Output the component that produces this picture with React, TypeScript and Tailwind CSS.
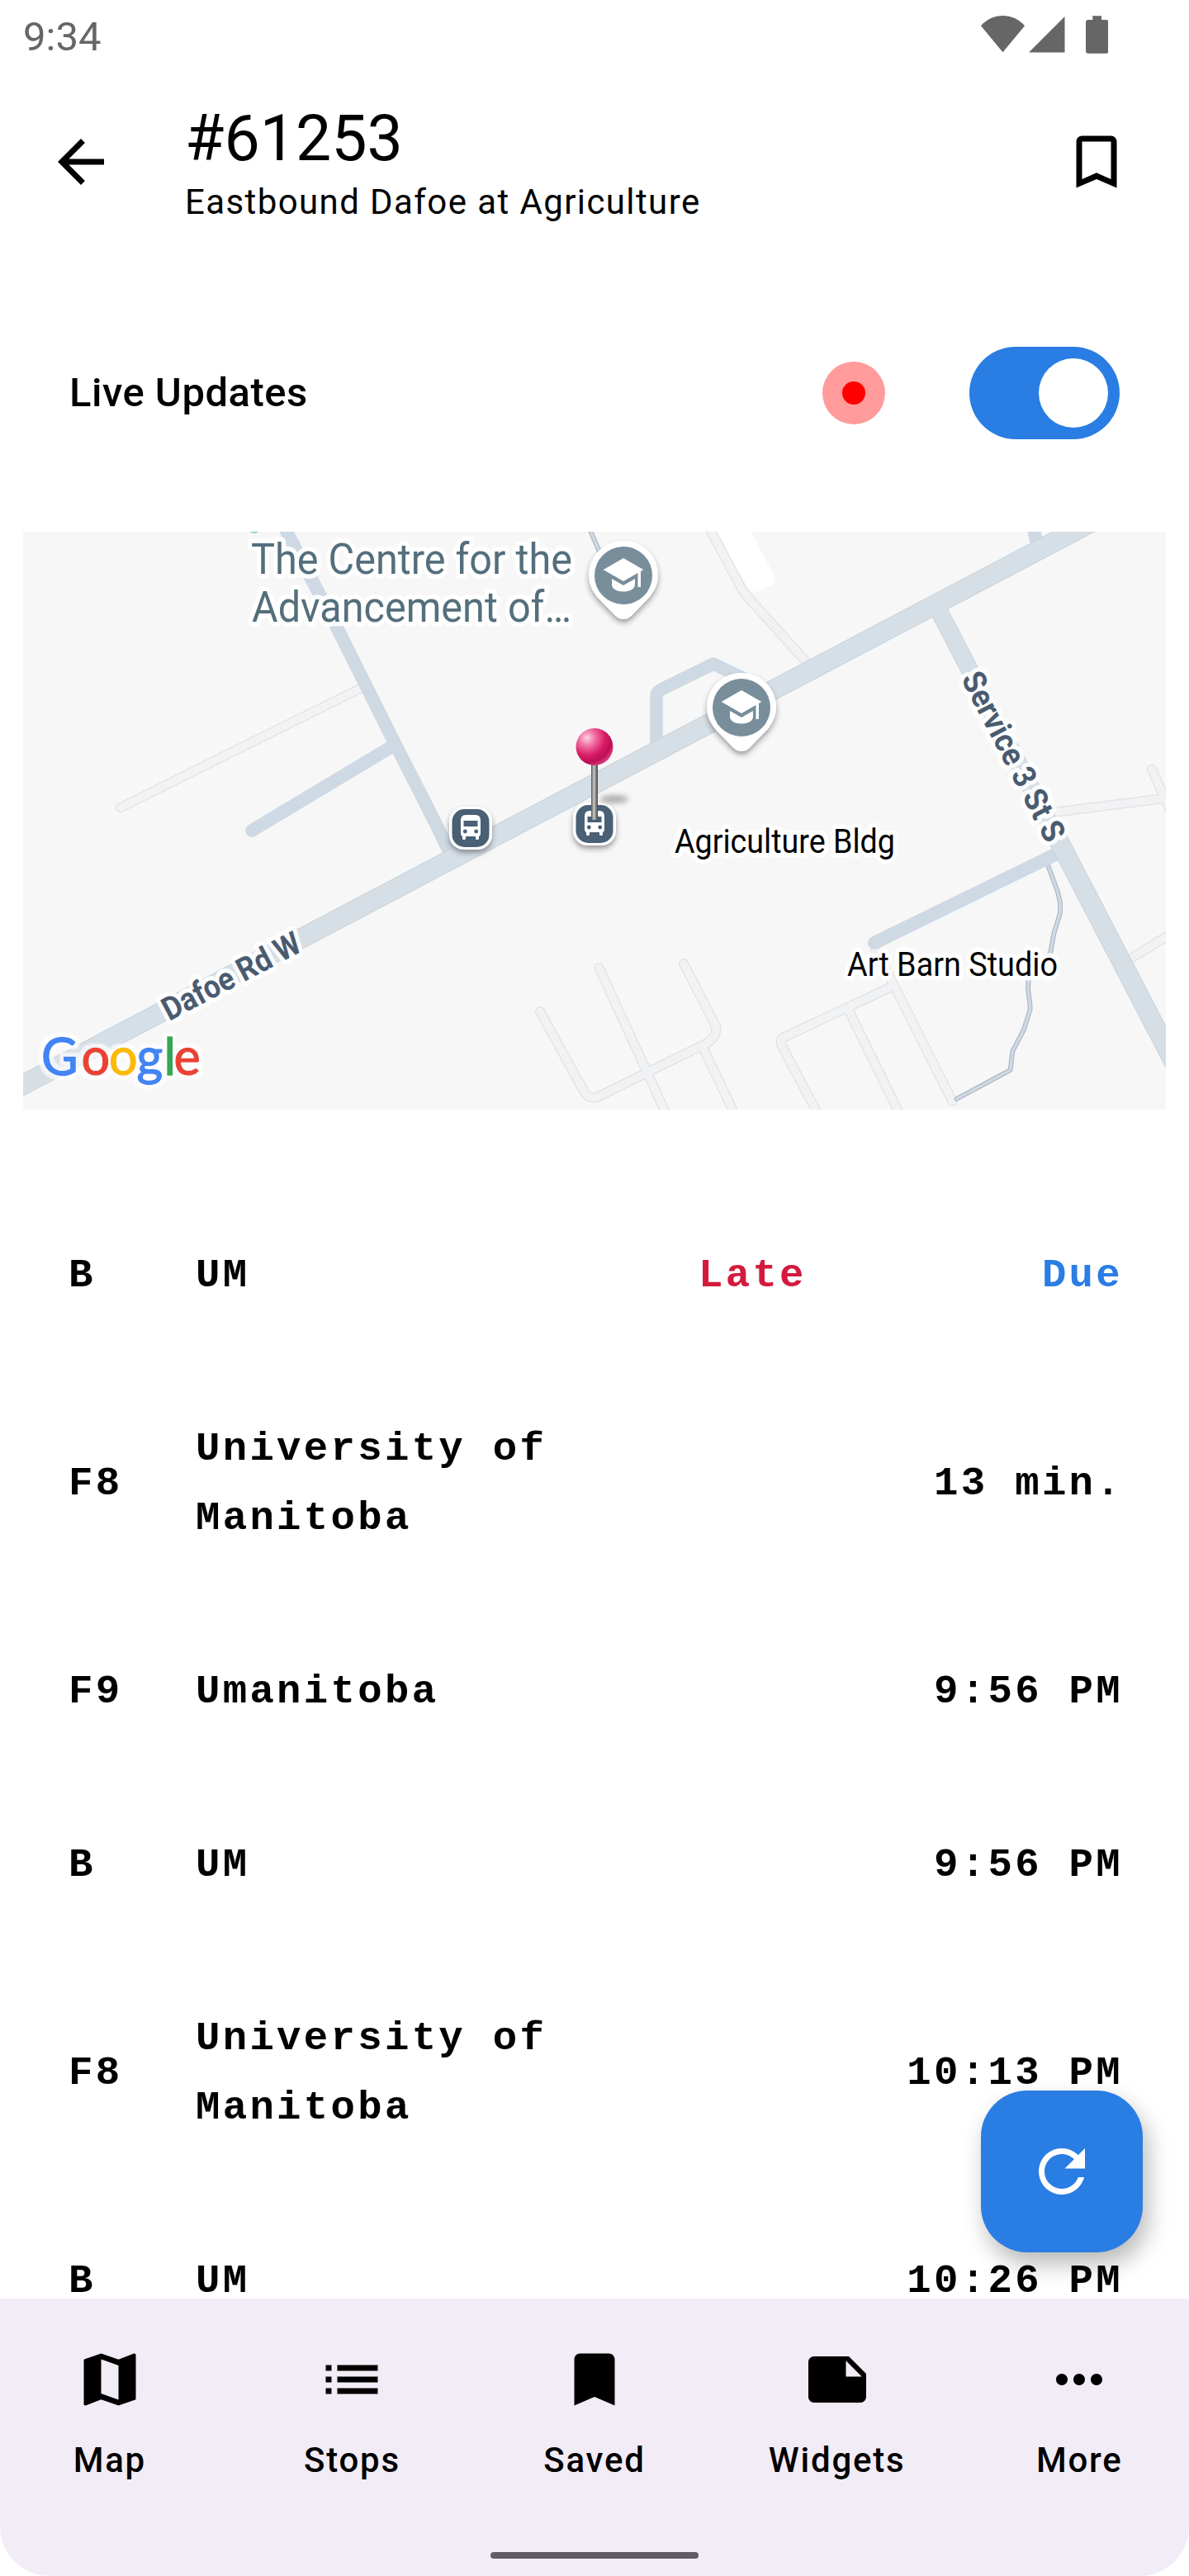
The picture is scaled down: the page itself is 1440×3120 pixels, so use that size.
import type { ReactNode, SVGProps } from "react";

function Icon({ d, className = "" }: { d: string; className?: string }) {
  return (
    <svg viewBox="0 0 24 24" className={`size-[84px] shrink-0 fill-current ${className}`} aria-hidden="true">
      <path d={d} />
    </svg>
  );
}

const icons = {
  back: "M20 11H7.83l5.59-5.59L12 4l-8 8 8 8 1.41-1.41L7.83 13H20v-2z",
  bookmarkOutline: "M17 3H7c-1.1 0-1.99.9-1.99 2L5 21l7-3 7 3V5c0-1.1-.9-2-2-2zm0 15l-5-2.18L7 18V5h10v13z",
  bookmark: "M17 3H7c-1.1 0-1.99.9-1.99 2L5 21l7-3 7 3V5c0-1.1-.9-2-2-2z",
  refresh:
    "M17.65 6.35C16.2 4.9 14.21 4 12 4c-4.42 0-7.99 3.58-7.99 8s3.57 8 7.99 8c3.73 0 6.84-2.55 7.73-6h-2.08c-.82 2.33-3.04 4-5.65 4-3.31 0-6-2.69-6-6s2.69-6 6-6c1.66 0 3.14.69 4.22 1.78L13 11h7V4l-2.35 2.35z",
  map: "M20.5 3l-.16.03L15 5.1 9 3 3.36 4.9c-.21.07-.36.25-.36.48V20.5c0 .28.22.5.5.5l.16-.03L9 18.9l6 2.1 5.64-1.9c.21-.07.36-.25.36-.48V3.5c0-.28-.22-.5-.5-.5zM15 19l-6-2.11V5l6 2.11V19z",
  list: "M3 13h2v-2H3v2zm0 4h2v-2H3v2zm0-8h2V7H3v2zm4 4h14v-2H7v2zm0 4h14v-2H7v2zM7 7v2h14V7H7z",
  note: "M22 10l-6-6H4c-1.1 0-2 .9-2 2v12.01c0 1.1.9 1.99 2 1.99l16-.01c1.1 0 2-.89 2-1.99v-8zm-7-4.5l5.5 5.5H15V5.5z",
  more: "M6 10c-1.1 0-2 .9-2 2s.9 2 2 2 2-.9 2-2-.9-2-2-2zm12 0c-1.1 0-2 .9-2 2s.9 2 2 2 2-.9 2-2-.9-2-2-2zm-6 0c-1.1 0-2 .9-2 2s.9 2 2 2 2-.9 2-2-.9-2-2-2z",
};

function StatusBar() {
  return (
    <div className="flex h-[84px] items-center justify-between pt-1 pr-[98px] pl-7 text-[49px] leading-none text-[#666]">
      <span>9:34</span>
      <svg viewBox="0 0 154 46" className="mb-1 h-[46px] w-[154px] fill-current" aria-hidden="true">
        <path d="M0 12.3C14-4 39-4 53 12.3L26.5 44.3z" />
        <path d="M58 44.5L101.500 1v43.500z" />
        <path d="M135 .3h11V5h5.500q3 0 3 3v34.800q0 3-3 3h-21.500q-3 0-3-3V8q0-3 3-3h5.500z" />
      </svg>
    </div>
  );
}

function Header() {
  return (
    <header className="flex h-[224px] items-center pr-[70px] pl-14">
      <Icon d={icons.back} />
      <div className="ml-[84px] grow">
        <h1 className="text-[77px] leading-[98px]">#61253</h1>
        <p className="text-[42px] leading-[56px] tracking-[1.4px]">Eastbound Dafoe at Agriculture</p>
      </div>
      <Icon d={icons.bookmarkOutline} />
    </header>
  );
}

function LiveUpdates() {
  return (
    <div className="flex h-[336px] items-center px-[84px]">
      <span className="grow text-[49px] leading-[70px] font-medium tracking-[0.5px]">Live Updates</span>
      <span className="flex size-[76px] items-center justify-center rounded-full bg-[#ff9b9b]">
        <span className="size-7 rounded-full bg-[#ff0000]" />
      </span>
      <span className="ml-[102px] flex h-28 w-[182px] items-center justify-end rounded-full bg-[#2a7de3] pr-[14px]">
        <span className="size-[84px] rounded-full bg-white" />
      </span>
    </div>
  );
}

const footpaths = [
  "M436 834L146 978",
  "M857 636L901 718L974 799",
  "M1275 984L1418 966",
  "M1395 932L1420 988",
  "M1366 1163L1420 1130",
  "M725.5 1172L782 1295L808 1352",
  "M828 1167L867 1243Q869 1256 855 1264L727 1327Q718 1333 709 1325L654 1225",
  "M851 1268L891 1352",
  "M1080 1195L948 1257Q944 1261 947 1267L992 1352",
  "M1027 1222L1091 1352",
  "M1060 1150L1084 1196L1153.500 1334",
];

const stream =
  "M1268 1045L1281 1080L1284 1093V1106L1276.500 1130L1272 1155L1252 1176L1245.700 1187L1245 1198L1247.500 1217V1223L1240 1247L1226.400 1273L1223.600 1296L1158.500 1331";

function SchoolPin({ x, y }: { x: number; y: number }) {
  return (
    <g transform={`translate(${x} ${y})`}>
      <path
        filter="url(#pinShadow)"
        fill="#fff"
        d="M0-42C24-42 42-23 42 0C42 10 38 18 31 27L10 48.500Q0 57.500-10 48.500L-31 27C-38 18-42 10-42 0C-42-23-24-42 0-42z"
      />
      <circle r="35" fill="#788e9b" />
      <path fill="#fff" d="M0-21L24.300-7L0 7L-24.300-7z M17.500-4.500L21-6.500V14H17.500z" />
      <path fill="#fff" d="M-14 4L0 12L14 4V11C14 16 8 19.500 0 19.500S-14 16-14 11z" />
    </g>
  );
}

function BusMarker({ x, y }: { x: number; y: number }) {
  return (
    <g transform={`translate(${x} ${y})`}>
      <rect filter="url(#pinShadow)" x="-26" y="-26" width="52" height="52" rx="18" fill="#fff" />
      <rect x="-22.500" y="-23" width="45" height="46" rx="15" fill="#496075" />
      <path
        fill="#fff"
        fillRule="evenodd"
        d="M-6-16H6Q12-16 12-9V7Q12 9 10 10V12.500Q10 14 8.500 14H7.500Q6 14 6 12.500V10H-6V12.500Q-6 14-7.500 14H-8.500Q-10 14-10 12.500V10Q-12 9-12 7V-9Q-12-16-6-16z M-8.500-9V-2H8.500V-9z"
      />
      <circle cx="-6.700" cy="4" r="2.400" fill="#496075" />
      <circle cx="6.700" cy="4" r="2.400" fill="#496075" />
    </g>
  );
}

function MapText({ children, ...rest }: { children: ReactNode } & SVGProps<SVGTextElement>) {
  return (
    <text
      stroke="#fff"
      strokeOpacity="0.92"
      strokeWidth="11"
      strokeLinejoin="round"
      paintOrder="stroke"
      lengthAdjust="spacingAndGlyphs"
      {...rest}
    >
      {children}
    </text>
  );
}

const wordmark = [
  { letter: "G", x: 50, color: "#4285f4" },
  { letter: "o", x: 98.5, color: "#ea4335" },
  { letter: "o", x: 132, color: "#fbbc05" },
  { letter: "g", x: 165.5, color: "#4285f4" },
  { letter: "l", x: 198.5, color: "#34a853" },
  { letter: "e", x: 210.5, color: "#ea4335" },
];

function StopMap() {
  return (
    <svg viewBox="28 644 1384 700" className="mx-7 block h-[700px] w-[1384px] bg-[#f7f7f7]">
      <defs>
        <filter id="pinShadow" x="-30%" y="-30%" width="160%" height="170%">
          <feDropShadow dx="0" dy="4" stdDeviation="3" floodColor="#2b2b33" floodOpacity="0.45" />
        </filter>
        <filter id="soft" x="-50%" y="-80%" width="200%" height="260%">
          <feGaussianBlur stdDeviation="3" />
        </filter>
        <filter id="halo" x="-10%" y="-20%" width="120%" height="140%">
          <feMorphology in="SourceAlpha" operator="dilate" radius="4" />
          <feGaussianBlur stdDeviation="1.500" />
          <feComponentTransfer result="grown">
            <feFuncA type="linear" slope="1.500" />
          </feComponentTransfer>
          <feFlood floodColor="#fff" floodOpacity="0.7" />
          <feComposite in2="grown" operator="in" />
          <feMerge>
            <feMergeNode />
            <feMergeNode in="SourceGraphic" />
          </feMerge>
        </filter>
        <radialGradient id="ball" cx="0.3" cy="0.26" r="0.78">
          <stop offset="0" stopColor="#fcd3e2" />
          <stop offset="0.3" stopColor="#f06ba0" />
          <stop offset="0.62" stopColor="#d81b66" />
          <stop offset="0.85" stopColor="#bd0f55" />
          <stop offset="1" stopColor="#d93a7c" />
        </radialGradient>
        <linearGradient id="needle" x1="0" x2="1" y1="0" y2="0">
          <stop offset="0" stopColor="#555" />
          <stop offset="0.4" stopColor="#c9c9c9" />
          <stop offset="1" stopColor="#444" />
        </linearGradient>
      </defs>

      <path d="M866 644H909.500L937.500 697Q939 706 934 709L913 718L903 708z" fill="#fff" />
      <ellipse cx="308" cy="643" rx="5" ry="2.500" fill="#7ccdb8" />

      <g fill="none" strokeLinecap="round" strokeLinejoin="round">
        <g stroke="#e0e1e3" strokeWidth="12">
          {footpaths.map((d) => (
            <path key={d} d={d} />
          ))}
        </g>
        <g stroke="#f1f2f4" strokeWidth="9.600">
          {footpaths.map((d) => (
            <path key={d} d={d} />
          ))}
        </g>
        <g stroke="#a9b5c6" strokeWidth="5.800">
          <path d={stream} />
          <path d="M712 636L732 682" />
        </g>
        <g stroke="#ced9e4" strokeWidth="3.600">
          <path d={stream} />
          <path d="M712 636L732 682" />
        </g>
        <g stroke="#ced9e4" strokeWidth="16">
          <path d="M343 636L407 758L477 898L529 1000L548 1040" />
          <path d="M475 904L305 1006" />
          <path d="M1251 636L1257 665" />
          <path d="M795 910V843Q795 838 801 835L864 804L930 836" strokeWidth="15.500" />
          <path d="M1284 1032L1059 1142" />
        </g>
        <g strokeLinecap="butt">
          <path d="M0 1328.700L1340 623" stroke="#c8d3dc" strokeWidth="24.500" />
          <path d="M1131 728L1285 1024" stroke="#c8d3dc" strokeWidth="21.500" />
          <path d="M1279 1012L1425 1293" stroke="#c8d3dc" strokeWidth="24" />
          <path d="M0 1328.700L1340 623" stroke="#d7dfe6" strokeWidth="22.500" />
          <path d="M1128 722L1285 1024" stroke="#d7dfe6" strokeWidth="19.500" />
          <path d="M1279 1012L1425 1293" stroke="#d7dfe6" strokeWidth="22" />
        </g>
      </g>

      <g fontSize="39" fontWeight="700" fill="#4a5b70">
        <MapText transform="translate(205 1237) rotate(-27.800)" textLength="184">
          Dafoe Rd W
        </MapText>
        <MapText transform="translate(1163.500 822) rotate(62.500)" textLength="226">
          Service 3 St S
        </MapText>
      </g>
      <g fontSize="52" fill="#546f7c">
        <MapText x="304" y="695" textLength="389">
          The Centre for the
        </MapText>
        <MapText x="305" y="753" textLength="387">
          Advancement of…
        </MapText>
      </g>
      <g fontSize="41" fill="#000">
        <MapText x="817" y="1033" textLength="267">
          Agriculture Bldg
        </MapText>
        <MapText x="1026" y="1182" textLength="255">
          Art Barn Studio
        </MapText>
      </g>

      <SchoolPin x={755} y={697} />
      <SchoolPin x={898} y={857} />
      <BusMarker x={570} y={1003} />
      <BusMarker x={720} y={998} />

      <ellipse cx="744" cy="968" rx="17" ry="5" fill="#555" opacity="0.45" filter="url(#soft)" />
      <rect x="716" y="920" width="8" height="73" rx="3" fill="url(#needle)" />
      <circle cx="720" cy="904.500" r="22.500" fill="url(#ball)" />

      <text y="1301.500" fontSize="61" strokeWidth="1.400" filter="url(#halo)" className="font-['Lato',sans-serif]">
        {wordmark.map(({ letter, x, color }) => (
          <tspan key={x} x={x} fill={color} stroke={color}>
            {letter}
          </tspan>
        ))}
      </text>
    </svg>
  );
}

type Departure = { route: string; name: string; note?: string; time: string; due?: boolean };

const departures: Departure[] = [
  { route: "B", name: "UM", note: "Late", time: "Due", due: true },
  { route: "F8", name: "University of Manitoba", time: "13 min." },
  { route: "F9", name: "Umanitoba", time: "9:56 PM" },
  { route: "B", name: "UM", time: "9:56 PM" },
  { route: "F8", name: "University of Manitoba", time: "10:13 PM" },
  { route: "B", name: "UM", time: "10:26 PM" },
];

function Departures() {
  return (
    <ul className="mt-24 font-['Liberation_Mono',monospace] text-[49px] leading-[84px] font-bold tracking-[3.300px]">
      {departures.map((d, i) => (
        <li key={i} className="flex items-center py-[63px] pr-[80px] pl-[83px]">
          <span className="w-[154px] shrink-0">{d.route}</span>
          <span className="w-[520px] shrink-0">{d.name}</span>
          <span className="w-[220px] shrink-0 pl-[89px] whitespace-nowrap text-[#d31a3d]">{d.note}</span>
          <span className={`grow text-right whitespace-nowrap ${d.due ? "text-[#2a7de3]" : ""}`}>{d.time}</span>
        </li>
      ))}
    </ul>
  );
}

const tabs = [
  { label: "Map", icon: icons.map },
  { label: "Stops", icon: icons.list },
  { label: "Saved", icon: icons.bookmark },
  { label: "Widgets", icon: icons.note },
  { label: "More", icon: icons.more },
];

function BottomNav() {
  return (
    <nav className="flex h-[336px] shrink-0 flex-col items-center rounded-b-[60px] bg-[#f2ecf7]">
      <div className="flex w-full grow gap-7 pt-14">
        {tabs.map((t) => (
          <div key={t.label} className="flex flex-1 flex-col items-center">
            <Icon d={t.icon} />
            <span className="mt-7 text-[42px] leading-[56px] font-medium tracking-[1.75px]">{t.label}</span>
          </div>
        ))}
      </div>
      <div className="mb-[21px] h-2 w-[252px] rounded-full bg-[#605d64]" />
    </nav>
  );
}

export default function App() {
  return (
    <div className="flex h-[3120px] w-[1440px] flex-col overflow-hidden bg-white font-['Roboto',sans-serif] text-black">
      <main className="relative min-h-0 grow overflow-hidden">
        <StatusBar />
        <Header />
        <LiveUpdates />
        <StopMap />
        <Departures />
        <button
          aria-label="Refresh"
          className="absolute right-14 bottom-14 flex size-[196px] items-center justify-center rounded-[56px] bg-[#2a7de3] text-white shadow-[6px_14px_28px_rgba(0,0,0,0.28)]"
        >
          <Icon d={icons.refresh} />
        </button>
      </main>
      <BottomNav />
    </div>
  );
}
